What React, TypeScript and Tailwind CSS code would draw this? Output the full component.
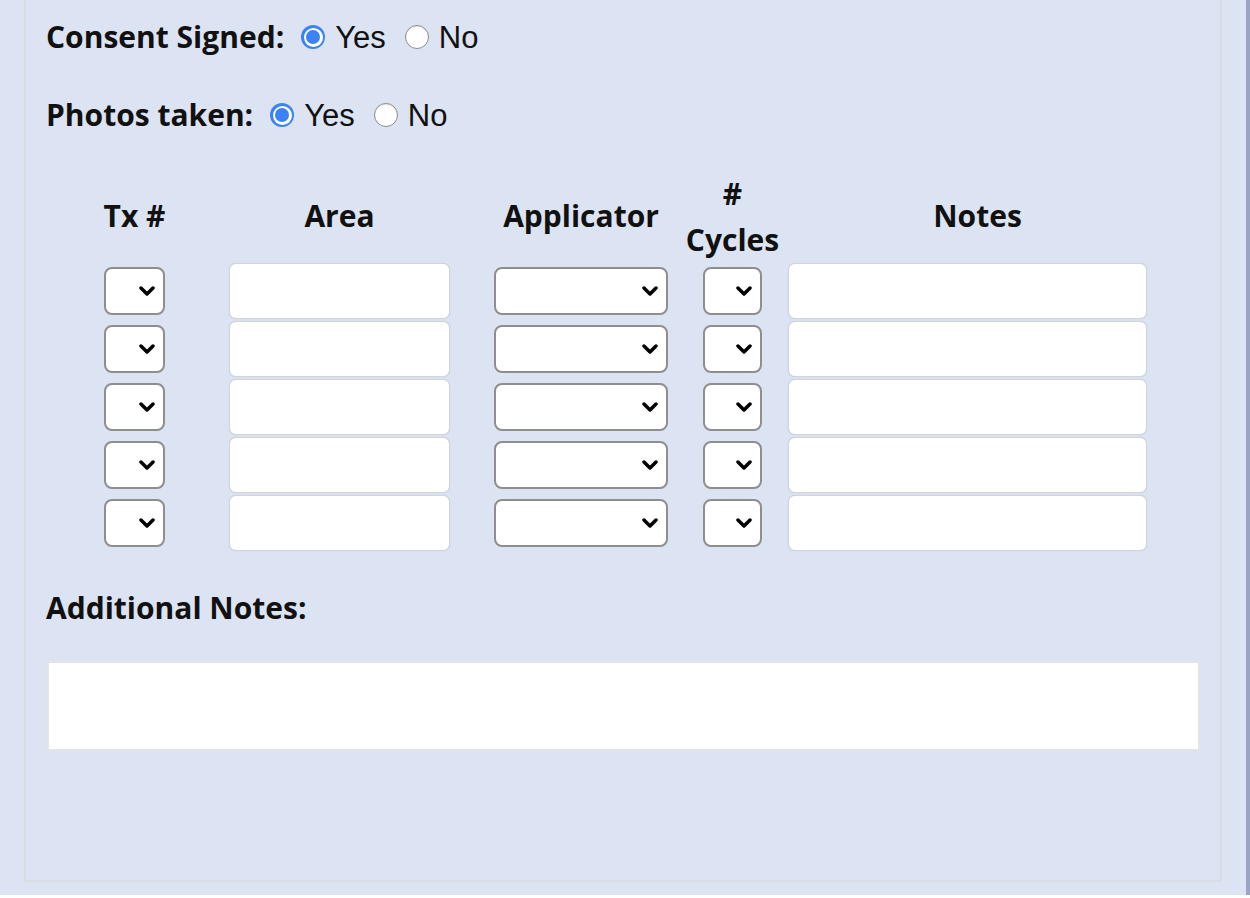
import React from "react";

const labelFont = { fontFamily: "'Open Sans', Lato, sans-serif" };

function Radio({ checked }: { checked: boolean }) {
  if (checked) {
    return (
      <span className="block w-[24px] h-[24px] rounded-full bg-[#3b82f6] shrink-0 p-[2.5px]">
        <span className="w-full h-full rounded-full bg-white flex items-center justify-center">
          <span className="block w-[14px] h-[14px] rounded-full bg-[#3b82f6]" />
        </span>
      </span>
    );
  }
  return (
    <span className="block w-[24px] h-[24px] rounded-full bg-white border-[1.5px] border-[#8a8a8a] shrink-0 shadow-[inset_0_1px_1px_rgba(0,0,0,0.08)]" />
  );
}

function RadioRow({ label }: { label: string }) {
  return (
    <div className="flex items-center h-[40px]">
      <span className="text-[30px] font-bold text-[#111] leading-none" style={labelFont}>
        {label}
      </span>
      <span className="ml-[17px] flex items-center">
        <Radio checked />
        <span className="ml-[10px] text-[31px] text-[#111] leading-none font-['Liberation_Sans',Arial,sans-serif]">Yes</span>
        <span className="ml-[19px]">
          <Radio checked={false} />
        </span>
        <span className="ml-[10px] text-[31px] text-[#111] leading-none font-['Liberation_Sans',Arial,sans-serif]">No</span>
      </span>
    </div>
  );
}

function Select({ w }: { w: string }) {
  return (
    <div className={`relative h-[48px] ${w} bg-white rounded-[8px] border-2 border-[#8e8e8e]`}>
      <svg
        className="absolute right-[8px] top-1/2 -translate-y-1/2"
        width="16"
        height="10"
        viewBox="0 0 16 10"
        fill="none"
      >
        <path d="M2 2 L8 8 L14 2" stroke="#000" strokeWidth="3.5" strokeLinecap="round" strokeLinejoin="round" />
      </svg>
    </div>
  );
}

function TextBox({ w }: { w: string }) {
  return (
    <div className={`h-[56px] ${w} bg-white rounded-[7px] border border-[#d2d4d8] shadow-[0_0_1px_rgba(0,0,0,0.15)]`} />
  );
}

export default function App() {
  const rows = [0, 1, 2, 3, 4];
  return (
    <div className="w-[1250px] h-[898px] bg-white overflow-hidden">
      <div className="flex h-[895px]">
        <div className="w-[1246px] h-full bg-[#dce3f2] pl-[24px]">
          <div className="w-[1198px] h-[882px] border-l-2 border-r-2 border-b-2 border-[#d9dde3] pl-[20px] pt-[17px]">
            <RadioRow label="Consent Signed:" />
            <div className="mt-[38px]">
              <RadioRow label="Photos taken:" />
            </div>

            {/* table header */}
            <div
              className="mt-[38px] h-[89px] flex items-center pl-[58px] pb-[4px] text-[30px] font-bold text-[#111] leading-[44px]"
              style={labelFont}
            >
              <div className="w-[61px] flex justify-center whitespace-nowrap">Tx #</div>
              <div className="ml-[64px] w-[221px] text-center">Area</div>
              <div className="ml-[44px] w-[174px] flex justify-center whitespace-nowrap">Applicator</div>
              <div className="ml-[35px] w-[59px] flex flex-col items-center leading-[46px] pt-[2px]">
                <span>#</span>
                <span>Cycles</span>
              </div>
              <div className="ml-[26px] w-[359px] text-center pl-[20px]">Notes</div>
            </div>

            <div className="pl-[58px]">
              {rows.map((r) => (
                <div key={r} className="h-[58px] flex items-center">
                  <Select w="w-[61px]" />
                  <div className="ml-[64px]">
                    <TextBox w="w-[221px]" />
                  </div>
                  <div className="ml-[44px]">
                    <Select w="w-[174px]" />
                  </div>
                  <div className="ml-[35px]">
                    <Select w="w-[59px]" />
                  </div>
                  <div className="ml-[26px]">
                    <TextBox w="w-[359px]" />
                  </div>
                </div>
              ))}
            </div>

            <div className="mt-[36px] h-[40px] flex items-center">
              <span className="text-[30px] font-bold text-[#111] leading-none" style={labelFont}>
                Additional Notes:
              </span>
            </div>

            <div className="mt-[33px] ml-[1px] w-[1153px] h-[90px] bg-white border-2 border-[#e3e4e6]" />
          </div>
        </div>
        <div className="w-[4px] h-full bg-[#9aa5c6]" />
      </div>
    </div>
  );
}
